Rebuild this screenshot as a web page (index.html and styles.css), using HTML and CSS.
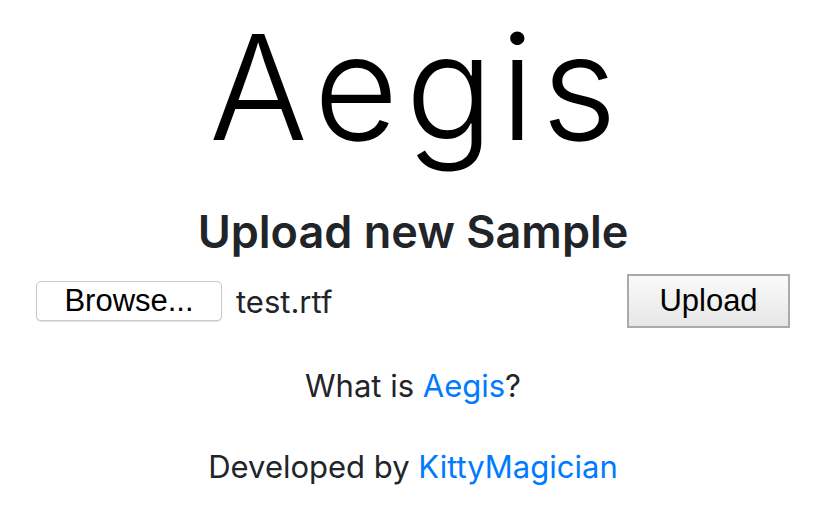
FILE: index.html
```html
<!DOCTYPE html>
<html>
<head>
<meta charset="utf-8">
<link rel="stylesheet" href="styles.css">
</head>
<body>
<main class="page">
  <h1 class="logo">Aegis</h1>
  <h2 class="title">Upload new Sample</h2>
  <form class="upload-form">
    <div class="file-field">
      <span class="browse-btn">Browse...</span>
      <span class="file-name">test.rtf</span>
    </div>
    <button type="button" class="upload-btn">Upload</button>
  </form>
  <p class="info">What is <a href="#" class="link">Aegis</a>?</p>
  <p class="info credits">Developed by <a href="#" class="link">KittyMagician</a></p>
</main>
</body>
</html>
```
FILE: styles.css
```css
html, body {
  margin: 0;
  padding: 0;
  background: #ffffff;
}
.page {
  width: 826px;
  display: flex;
  flex-direction: column;
  align-items: center;
  font-family: "Inter", "Liberation Sans", sans-serif;
  color: #212529;
}
.logo {
  margin: 2px 0 0 7px;
  font-family: "Inter", sans-serif;
  font-weight: 300;
  font-size: 146px;
  line-height: 170px;
  letter-spacing: 7px;
  color: #000;
}
.title {
  margin: 32px 0 0 0;
  font-weight: 600;
  font-size: 45px;
  line-height: 56px;
}
.upload-form {
  width: 754px;
  margin-top: 14px;
  display: flex;
  justify-content: space-between;
  align-items: center;
}
.file-field {
  display: flex;
  align-items: center;
  gap: 14px;
}
.browse-btn {
  box-sizing: border-box;
  width: 186px;
  height: 40px;
  display: flex;
  align-items: center;
  justify-content: center;
  border: 1px solid #c8c8c8;
  border-radius: 5px;
  background: #fff;
  box-shadow: 0 1px 1px rgba(0,0,0,0.12);
  font-family: "Liberation Sans", sans-serif;
  font-size: 31px;
  color: #000;
}
.file-name {
  font-size: 31px;
  color: #212529;
}
.upload-btn {
  box-sizing: border-box;
  width: 163px;
  height: 54px;
  border: 2px solid #aaaaaa;
  border-radius: 0;
  background: linear-gradient(#fafafa, #e6e6e6);
  font-family: "Liberation Sans", sans-serif;
  font-size: 31px;
  color: #000;
  padding: 0;
}
.info {
  margin: 36px 0 0 0;
  font-size: 31px;
  line-height: 44px;
}
.credits {
  margin-top: 37px;
}
.link {
  color: #007bff;
  text-decoration: none;
}
```
